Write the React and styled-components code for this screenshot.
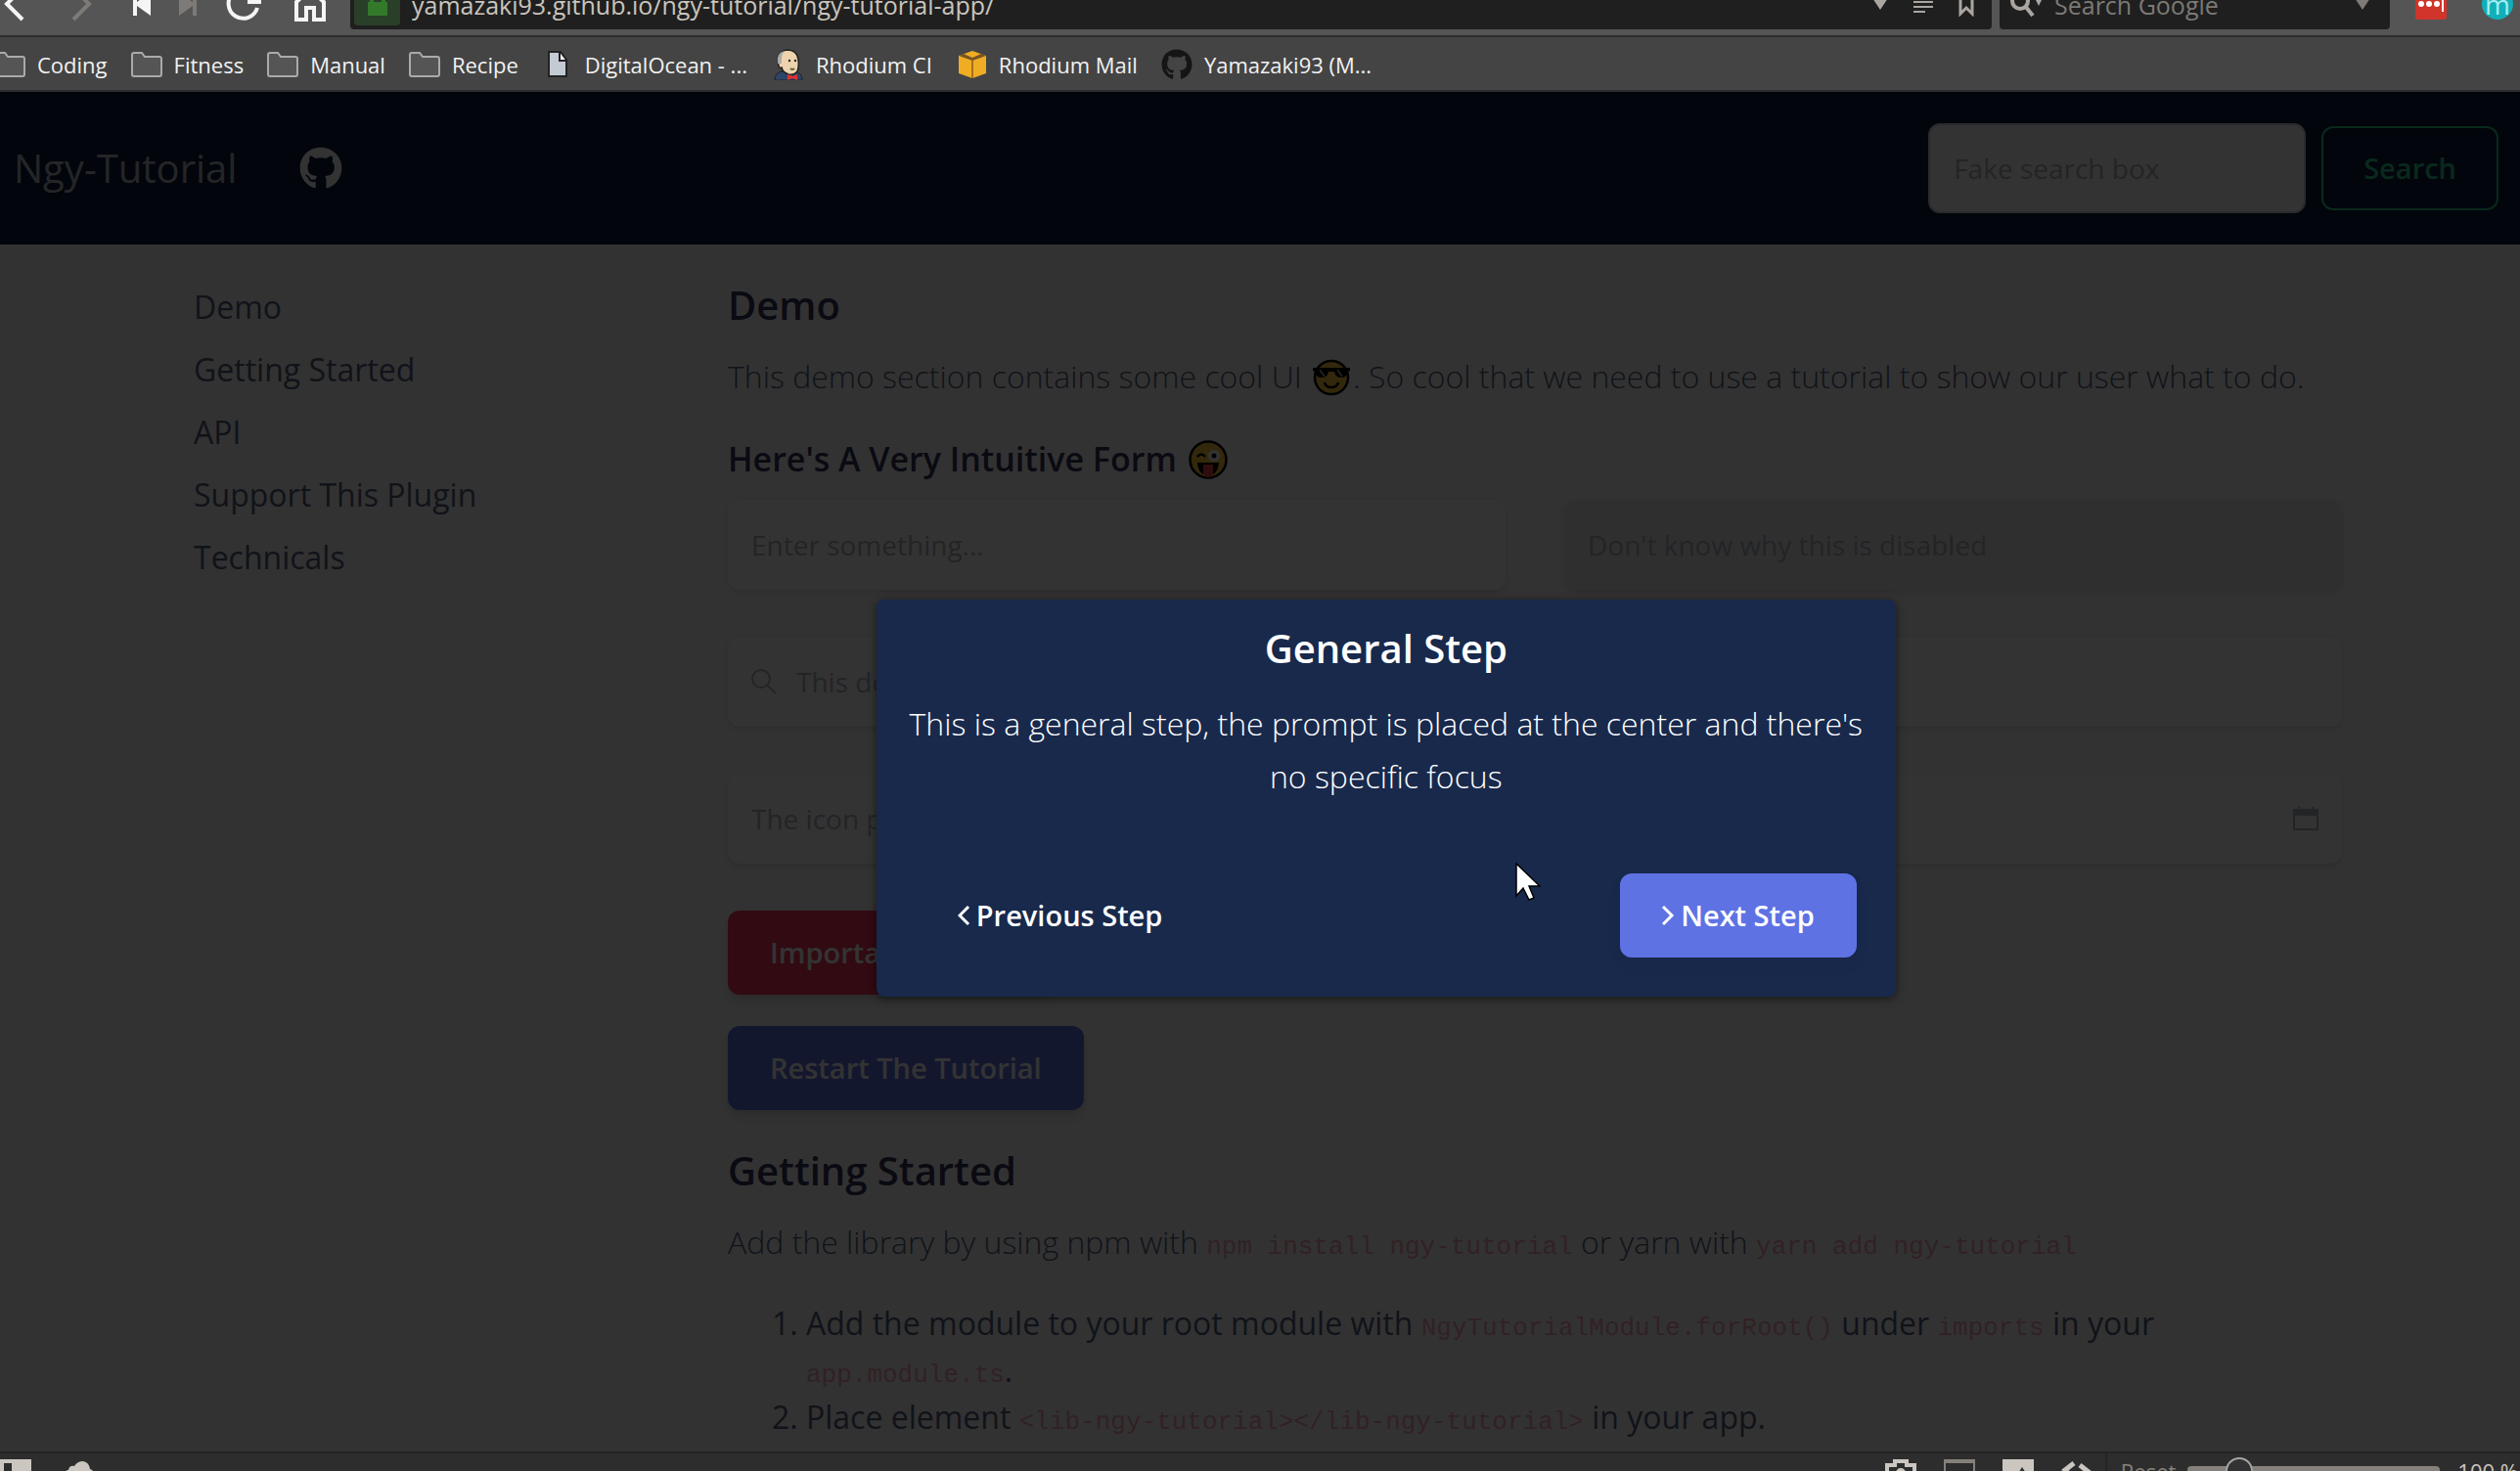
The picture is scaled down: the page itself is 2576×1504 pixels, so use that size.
import React from "react";
import styled, { createGlobalStyle } from "styled-components";
import { FaGithub } from "react-icons/fa";

const GlobalStyle = createGlobalStyle`
  *, *::before, *::after { box-sizing: border-box; }
  body {
    margin: 0;
    overflow: hidden;
    font-family: "Open Sans", "Noto Sans", sans-serif;
    font-size: 32px;
    line-height: 48px;
    color: #525f7f;
    background: #323232;
  }
  h1, h2, h3, p, ol, ul { margin: 0; padding: 0; }
  button, input { font-family: inherit; }
`;

const Window = styled.div`
  display: flex;
  flex-direction: column;
  height: 100vh;
  overflow: hidden;
`;

/* ---------- browser toolbar ---------- */

const ToolbarClip = styled.div`
  flex: none;
  display: flex;
  align-items: flex-end;
  height: 38px;
  overflow: hidden;
  background: #555555;
  border-bottom: 2px solid #2d2d2d;
`;

const Toolbar = styled.div`
  flex: 1;
  display: flex;
  align-items: center;
  gap: 8px;
  height: 64px;
  padding-right: 7px;
`;

const NavGroup = styled.div`
  display: flex;
  align-items: center;
  gap: 16px;
  width: 350px;
  flex: none;
`;

const ToolButton = styled.button`
  display: flex;
  flex: none;
  justify-content: center;
  padding: 0;
  border: 0;
  background: none;
  width: ${(p) => p.$width || 32}px;
  color: ${(p) => (p.$dim ? "#7d7a77" : "#f5f5f5")};
  svg { display: block; flex: none; }
`;

const AddressBar = styled.div`
  flex: 1;
  display: flex;
  align-items: center;
  gap: 12px;
  height: 52px;
  padding: 0 18px 0 4px;
  background: #1f1f1f;
  border-radius: 4px;
`;

const SecureBadge = styled.span`
  display: flex;
  align-items: center;
  justify-content: center;
  width: 47px;
  height: 44px;
  background: #293f27;
  border-radius: 4px;
`;

const BarInput = styled.input`
  flex: 1;
  min-width: 0;
  height: 44px;
  padding: 2px 0 0;
  border: 0;
  outline: 0;
  background: none;
  font-size: 25px;
  color: #c9c4bd;
  &::placeholder { color: #7c7976; opacity: 1; }
`;

const SearchBar = styled(AddressBar)`
  flex: none;
  width: 399px;
  padding: 0 20px 0 11px;
`;

const BarIcons = styled.span`
  display: flex;
  align-items: center;
  gap: 26px;
  color: #aaa5a0;
  svg { flex: none; }
`;

const Extensions = styled.div`
  display: flex;
  flex: none;
  align-items: center;
  gap: 36px;
  padding-left: 18px;
`;

const Extension = styled.button`
  display: flex;
  flex: none;
  align-items: center;
  justify-content: center;
  width: 32px;
  height: 32px;
  padding: 0;
  border: 0;
  border-radius: ${(p) => (p.$round ? "16px" : "3px")};
  background: ${(p) => p.$color};
  color: #a8ecf0;
  font-size: 28px;
  line-height: 24px;
`;

/* ---------- bookmarks ---------- */

const Bookmarks = styled.nav`
  flex: none;
  display: flex;
  align-items: center;
  gap: 24px;
  height: 56px;
  margin-left: -6px;
  padding-top: 2px;
  background: #444444;
  border-bottom: 2px solid #2d2d2f;
  font-size: 22px;
  line-height: 32px;
`;

const Bookmark = styled.a`
  display: flex;
  align-items: center;
  gap: 12px;
  color: #f2f2f2;
  text-decoration: none;
  white-space: nowrap;
  svg { flex: none; display: block; }
`;

/* ---------- page ---------- */

const Viewport = styled.div`
  position: relative;
  flex: 1;
  min-height: 0;
  overflow: hidden;
  background: #fafafa;
`;

const Header = styled.header`
  display: flex;
  align-items: center;
  gap: 64px;
  padding: 32px 22px 32px 14px;
  background: #0a1a3c;
`;

const Brand = styled.a`
  font-size: 40px;
  line-height: 60px;
  color: rgba(255, 255, 255, 0.7);
  text-decoration: none;
`;

const HeaderLink = styled.a`
  display: flex;
  color: #ffffff;
`;

const SearchForm = styled.form`
  display: flex;
  align-items: center;
  gap: 16px;
  margin-left: auto;
`;

const Control = styled.input`
  width: 100%;
  height: 92px;
  padding: 0 24px;
  border: 0;
  border-radius: 12px;
  outline: 0;
  font-size: 28px;
  color: #8898aa;
  background: #ffffff;
  box-shadow: 0 2px 6px rgba(50, 50, 93, 0.15), 0 2px 0 rgba(0, 0, 0, 0.02);
  &::placeholder { color: #adb5bd; opacity: 1; }
  &:disabled { background: #e9ecef; }
`;

const HeaderSearch = styled(Control)`
  width: 386px;
  border: 2px solid #cad1d7;
  box-shadow: none;
`;

const Button = styled.button`
  display: flex;
  align-items: center;
  gap: 5px;
  height: 86px;
  padding: 0 41px;
  border: 2px solid ${(p) => p.$border || p.$color || "transparent"};
  border-radius: 12px;
  background: ${(p) => p.$color || "transparent"};
  color: ${(p) => p.$text || "#ffffff"};
  font-size: 29px;
  font-weight: 600;
  line-height: 42px;
  white-space: nowrap;
  box-shadow: ${(p) =>
    p.$flat ? "none" : "0 8px 12px rgba(50, 50, 93, 0.11), 0 2px 6px rgba(0, 0, 0, 0.08)"};
`;

const Container = styled.div`
  display: grid;
  grid-template-columns: 1fr 3fr;
  width: 100%;
  max-width: 2288px;
  margin: 0 auto;
  padding: 32px 8px 0 0;
`;

const Sidebar = styled.nav`
  display: flex;
  flex-direction: column;
  padding: 0 54px;
`;

const SideLink = styled.a`
  padding: 8px 0;
  color: #525f7f;
  text-decoration: none;
`;

const Main = styled.main`
  padding: 0 30px;
`;

const Title = styled.h2`
  margin-bottom: 16px;
  font-size: 40px;
  line-height: 60px;
  font-weight: 600;
  color: ${(p) => p.$color || "#32325d"};
`;

const Subtitle = styled.h3`
  display: flex;
  align-items: center;
  gap: 12px;
  margin-bottom: 16px;
  font-size: 34px;
  line-height: 51px;
  font-weight: 600;
  color: #32325d;
`;

const Lead = styled.p`
  margin-bottom: 32px;
  line-height: 54px;
  font-weight: 300;
  svg {
    margin: 0 3px;
    vertical-align: -8px;
  }
`;

const Fields = styled.div`
  display: grid;
  grid-template-columns: 1fr 1fr;
  gap: 48px 60px;
`;

const IconField = styled.label`
  grid-column: 1 / -1;
  display: flex;
  align-items: center;
  gap: 20px;
  padding: 0 24px;
  border-radius: 12px;
  background: #ffffff;
  color: #adb5bd;
  box-shadow: 0 2px 6px rgba(50, 50, 93, 0.15), 0 2px 0 rgba(0, 0, 0, 0.02);
  svg { flex: none; }
`;

const BareControl = styled(Control)`
  padding: 0;
  border-radius: 0;
  box-shadow: none;
`;

const Actions = styled.div`
  display: flex;
  flex-direction: column;
  align-items: flex-start;
  gap: 32px;
  padding: 48px 0 32px;
`;

const Code = styled.code`
  font-family: "Liberation Mono", monospace;
  font-size: 26px;
  font-weight: 400;
  line-height: 24px;
  color: #f3a4b5;
`;

const Steps = styled.ol`
  padding-left: 80px;
`;

/* ---------- tutorial overlay ---------- */

const Backdrop = styled.div`
  position: absolute;
  inset: 0;
  background: rgba(0, 0, 0, 0.8);
`;

const Dialog = styled.section`
  position: absolute;
  top: 519px;
  left: 55%;
  width: 1042px;
  padding: 20px;
  transform: translateX(-50%);
  border-radius: 8px;
  background: #18294c;
  color: #ffffff;
  text-align: center;
  box-shadow: 0 2px 10px rgba(0, 0, 0, 0.5);
`;

const DialogTitle = styled(Title)`
  margin-bottom: 20px;
`;

const DialogText = styled.p`
  line-height: 54px;
  font-weight: 300;
`;

const DialogActions = styled.div`
  display: flex;
  justify-content: space-between;
  padding: 72px 20px 20px;
`;

const Pointer = styled.svg`
  position: absolute;
  top: 788px;
  left: 1549px;
`;

/* ---------- status bar ---------- */

const StatusClip = styled.footer`
  flex: none;
  height: 20px;
  overflow: hidden;
  background: #2d2d2d;
  border-top: 2px solid #242424;
`;

const Status = styled.div`
  display: flex;
  align-items: center;
  justify-content: space-between;
  height: 36px;
  padding-right: 2px;
  color: #cbc6bf;
  font-size: 22px;
  line-height: 36px;
`;

const StatusGroup = styled.div`
  display: flex;
  align-items: center;
  gap: ${(p) => p.$gap}px;
`;

const Zoom = styled.div`
  display: flex;
  align-items: center;
  gap: 12px;
  height: 36px;
  margin-left: -15px;
  padding-left: 14px;
  border-left: 2px solid #242424;
`;

const ZoomReset = styled.button`
  padding: 0;
  border: 0;
  background: none;
  color: #85817a;
  font-size: 22px;
`;

const ZoomSlider = styled.input`
  appearance: none;
  width: 258px;
  height: 10px;
  margin: 0 6px 0 0;
  border-radius: 4px;
  background: #85817a;
  &::-webkit-slider-thumb {
    appearance: none;
    width: 28px;
    height: 28px;
    border: 2px solid #a5a5a5;
    border-radius: 14px;
    background: #323232;
  }
`;

/* ---------- drawings ---------- */

const Folder = () => (
  <svg width="32" height="26" viewBox="0 0 32 26" fill="#555" stroke="#aaa" strokeWidth="2">
    <path d="M1 23V3q0-2 2-2h8l3 4h15q2 0 2 2v16q0 2-2 2H3q-2 0-2-2z" />
  </svg>
);

const Document = () => (
  <svg width="32" height="28" viewBox="0 0 32 28">
    <path d="M7 1h12l6 8v17H7z" fill="#c4cad2" stroke="#222" strokeWidth="2" />
    <path d="M18 2v8h6" fill="#fff" stroke="#222" strokeWidth="2" />
  </svg>
);

const Butler = () => (
  <svg width="34" height="32" viewBox="0 0 34 32">
    <path d="M4 32q0-9 9-9h11q8 1 8 9z" fill="#2f4568" stroke="#222" />
    <path d="M14 22l6 6 5-7z" fill="#fff" />
    <path d="M8 17Q4 4 16 1q11 0 12 10 1 7-1 12-3 4-9 3-6-2-7-7-3 1-3-2z" fill="#edd3ae" stroke="#222" strokeWidth="1.5" />
    <path d="M7 15Q5 4 14 2q-4 4-3 13z" fill="#aaa" />
    <circle cx="19" cy="12" r="1.2" fill="#222" />
    <circle cx="25" cy="12" r="1.2" fill="#222" />
    <path d="M20 20q2 2 4 0" fill="none" stroke="#664" strokeWidth="2" />
    <path d="M17 26l5 2 5-2v6l-5-2-5 2z" fill="#d33" />
  </svg>
);

const Cube = () => (
  <svg width="32" height="30" viewBox="0 0 32 30">
    <path d="M3 6l14-5 14 5v18l-14 5-14-5z" fill="#f0ad24" />
    <path d="M3 6l14 5 14-5-5-2-9 4-9-4z" fill="#775423" />
    <path d="M16 11h2v18h-2z" fill="#a56f1e" />
  </svg>
);

const CoolFace = () => (
  <svg width="38" height="38" viewBox="0 0 38 38" role="img" aria-label="Smiling face with sunglasses">
    <circle cx="19" cy="19" r="17" fill="#ffc83d" stroke="#000" strokeWidth="2.5" />
    <path d="M0 9h38v3l-2 1q-1 6-7 6-6 0-7-6h-6q-1 6-7 6-6 0-7-6l-2-1z" fill="#000" />
    <path d="M7 11l5 7M25 11l5 7" stroke="#999" strokeWidth="2" />
    <path d="M12 24q1 5 7 5t7-5" fill="none" stroke="#000" strokeWidth="2.5" />
  </svg>
);

const TongueFace = () => (
  <svg width="40" height="40" viewBox="0 0 40 40" role="img" aria-label="Winking face with tongue">
    <circle cx="20" cy="20" r="18.5" fill="#ffc83d" stroke="#000" strokeWidth="2.5" />
    <path d="M9 17q4-5 8 0" fill="none" stroke="#000" strokeWidth="2.5" />
    <circle cx="26" cy="16" r="6" fill="#fff" />
    <circle cx="26" cy="16" r="2.5" fill="#000" />
    <path d="M9 23h22q-1 13-11 13T9 23z" fill="#000" />
    <path d="M15 25h10v9q-1 4-5 4t-5-4z" fill="#e8404a" />
  </svg>
);

const Chevron = ({ right }) => (
  <svg width="14" height="22" viewBox="0 0 14 22" fill="none" stroke="currentColor" strokeWidth="3" aria-hidden="true">
    <path d={right ? "M1 2l9 9-9 9" : "M11 2L2 11l9 9"} />
  </svg>
);

const Caret = () => (
  <svg width="16" height="12" viewBox="0 0 16 12" fill="currentColor" aria-hidden="true">
    <path d="M0 0h16L8 12z" />
  </svg>
);

const BOOKMARKS = [
  ["Coding", <Folder />],
  ["Fitness", <Folder />],
  ["Manual", <Folder />],
  ["Recipe", <Folder />],
  ["DigitalOcean - ...", <Document />],
  ["Rhodium CI", <Butler />],
  ["Rhodium Mail", <Cube />],
  ["Yamazaki93 (M...", <FaGithub size={32} color="#151515" />],
];

const SECTIONS = ["Demo", "Getting Started", "API", "Support This Plugin", "Technicals"];

function BrowserToolbar() {
  return (
    <ToolbarClip>
      <Toolbar>
        <NavGroup>
          <ToolButton aria-label="Back">
            <svg width="32" height="36" viewBox="0 0 32 36" fill="none" stroke="currentColor" strokeWidth="4">
              <path d="M23 2L7 18l16 16" />
            </svg>
          </ToolButton>
          <ToolButton aria-label="Forward" $dim $width={72}>
            <svg width="32" height="36" viewBox="0 0 32 36" fill="none" stroke="currentColor" strokeWidth="4">
              <path d="M7 2l16 16L7 34" />
            </svg>
          </ToolButton>
          <ToolButton aria-label="Rewind" $width={18}>
            <svg width="18" height="24" viewBox="0 0 18 24" fill="currentColor">
              <path d="M0 0h4v10L18 0v24L4 14v10H0z" />
            </svg>
          </ToolButton>
          <ToolButton aria-label="Fast forward" $dim $width={44}>
            <svg width="18" height="24" viewBox="0 0 18 24" fill="currentColor">
              <path d="M18 0h-4v10L0 0v24l14-10v10h4z" />
            </svg>
          </ToolButton>
          <ToolButton aria-label="Reload" $width={38}>
            <svg width="36" height="36" viewBox="0 0 36 36" fill="none" stroke="currentColor" strokeWidth="4">
              <path d="M31 11A15 15 0 1 0 32 22" />
              <path d="M22 16h12V4" />
            </svg>
          </ToolButton>
          <ToolButton aria-label="Home" $width={66}>
            <svg width="32" height="36" viewBox="0 0 32 36" fill="none" stroke="currentColor" strokeWidth="4">
              <path d="M2 16L16 3l14 13v18H20V22h-8v12H2z" />
            </svg>
          </ToolButton>
        </NavGroup>
        <AddressBar>
          <SecureBadge>
            <svg width="20" height="30" viewBox="0 0 20 30">
              <path d="M4 16V8q0-6 6-6t6 6v8" fill="none" stroke="#327a2a" strokeWidth="4" />
              <path d="M0 13h20v14H0z" fill="#327a2a" />
            </svg>
          </SecureBadge>
          <BarInput aria-label="Address" defaultValue="yamazaki93.github.io/ngy-tutorial/ngy-tutorial-app/" />
          <BarIcons>
            <Caret />
            <svg width="20" height="20" viewBox="0 0 20 20" stroke="currentColor" strokeWidth="2">
              <path d="M0 3h20M0 8h20M0 13h20M0 18h12" />
            </svg>
            <svg width="16" height="26" viewBox="0 0 16 26" fill="none" stroke="currentColor" strokeWidth="3">
              <path d="M2 2h12v21l-6-6-6 6z" />
            </svg>
          </BarIcons>
        </AddressBar>
        <SearchBar>
          <BarIcons>
            <svg width="33" height="28" viewBox="0 0 33 28" fill="none" stroke="currentColor" strokeWidth="4">
              <circle cx="10" cy="11" r="8" />
              <path d="M15 16l8 10" />
              <path d="M25 8h8l-4 8z" fill="currentColor" stroke="none" />
            </svg>
          </BarIcons>
          <BarInput aria-label="Search Google" placeholder="Search Google" />
          <ToolButton aria-label="Search engines" $dim $width={16}>
            <Caret />
          </ToolButton>
        </SearchBar>
        <Extensions>
          <Extension $color="#d0342a" aria-label="Password manager">
            <svg width="28" height="16" viewBox="0 0 28 16" fill="#fff">
              <circle cx="4" cy="8" r="3" />
              <circle cx="12" cy="8" r="3" />
              <circle cx="20" cy="8" r="3" />
              <path d="M25 0h2v16h-2z" />
            </svg>
          </Extension>
          <Extension $color="#10b0b8" $round>m</Extension>
        </Extensions>
      </Toolbar>
    </ToolbarClip>
  );
}

function Page() {
  return (
    <>
      <Header>
        <Brand href="#top">Ngy-Tutorial</Brand>
        <HeaderLink href="#github" aria-label="GitHub">
          <FaGithub size={44} />
        </HeaderLink>
        <SearchForm>
          <HeaderSearch aria-label="Search" placeholder="Fake search box" />
          <Button type="button" $border="#2dce89" $text="#2dce89" $flat>
            Search
          </Button>
        </SearchForm>
      </Header>
      <Container>
        <Sidebar>
          {SECTIONS.map((name) => (
            <SideLink key={name} href="#section">
              {name}
            </SideLink>
          ))}
        </Sidebar>
        <Main>
          <Title>Demo</Title>
          <Lead>
            This demo section contains some cool UI <CoolFace />. So cool that we need to use a
            tutorial to show our user what to do.
          </Lead>
          <Subtitle>
            Here's A Very Intuitive Form <TongueFace />
          </Subtitle>
          <Fields>
            <Control aria-label="Something" placeholder="Enter something..." />
            <Control aria-label="Disabled" placeholder="Don't know why this is disabled" disabled />
            <IconField>
              <svg width="26" height="26" viewBox="0 0 26 26" fill="none" stroke="currentColor" strokeWidth="2">
                <circle cx="10" cy="10" r="9" />
                <path d="M17 17l8 8" />
              </svg>
              <BareControl aria-label="Search field" placeholder="This does nothing" />
            </IconField>
            <IconField>
              <BareControl aria-label="Date field" placeholder="The icon position is different" />
              <svg width="26" height="24" viewBox="0 0 26 24">
                <path d="M1 3h24v20H1z" fill="none" stroke="currentColor" strokeWidth="2" />
                <path d="M0 2h26v7H0zM5 0h2v4H5zM19 0h2v4h-2z" fill="currentColor" />
              </svg>
            </IconField>
          </Fields>
          <Actions>
            <Button $color="#f5365c">Important Button</Button>
            <Button $color="#5e72e4">Restart The Tutorial</Button>
          </Actions>
          <Title>Getting Started</Title>
          <Lead>
            Add the library by using npm with <Code>npm install ngy-tutorial</Code> or yarn with{" "}
            <Code>yarn add ngy-tutorial</Code>
          </Lead>
          <Steps>
            <li>
              Add the module to your root module with <Code>NgyTutorialModule.forRoot()</Code> under{" "}
              <Code>imports</Code> in your <Code>app.module.ts</Code>.
            </li>
            <li>
              Place element <Code>{"<lib-ngy-tutorial></lib-ngy-tutorial>"}</Code> in your app.
            </li>
          </Steps>
        </Main>
      </Container>
    </>
  );
}

function TutorialStep() {
  return (
    <Backdrop>
      <Dialog role="dialog" aria-labelledby="step-title">
        <DialogTitle id="step-title" $color="#ffffff">
          General Step
        </DialogTitle>
        <DialogText>
          This is a general step, the prompt is placed at the center and there's no specific focus
        </DialogText>
        <DialogActions>
          <Button $flat>
            <Chevron />
            Previous Step
          </Button>
          <Button $color="#5e72e4">
            <Chevron right />
            Next Step
          </Button>
        </DialogActions>
      </Dialog>
      <Pointer width="26" height="40" viewBox="0 0 26 40">
        <path d="M1 1v33l7-8 6 12 5-2-5-12h11z" fill="#fff" stroke="#000" strokeWidth="1.5" />
      </Pointer>
    </Backdrop>
  );
}

function StatusBar() {
  return (
    <StatusClip>
      <Status>
        <StatusGroup $gap={34}>
          <svg width="32" height="24" viewBox="0 0 32 24">
            <path d="M0 0h32v24H0z" fill="#cbc6bf" />
            <path d="M4 4h8v16H4z" fill="#2d2d2d" />
          </svg>
          <svg width="30" height="20" viewBox="0 0 30 20" fill="#cbc6bf">
            <path d="M6 20q-6 0-6-6 0-5 4-5 1-5 6-4 3-5 9-5 6 1 7 8 4 1 4 6t-5 6z" />
          </svg>
        </StatusGroup>
        <StatusGroup $gap={28}>
          <svg width="32" height="24" viewBox="0 0 32 24" fill="none" stroke="#cbc6bf" strokeWidth="4">
            <path d="M2 22V6h8V2h12v4h8v16z" />
            <circle cx="16" cy="14" r="3" />
          </svg>
          <svg width="32" height="24" viewBox="0 0 32 24" fill="none" stroke="#85817a">
            <path d="M1 1v22h30V1z" strokeWidth="2" />
            <path d="M0 2h32" strokeWidth="4" />
          </svg>
          <svg width="32" height="24" viewBox="0 0 32 24">
            <path d="M0 0h32v24H0z" fill="#cbc6bf" />
            <path d="M4 20l8-7 3 3 5-8 8 12z" fill="#2d2d2d" />
          </svg>
          <svg width="32" height="20" viewBox="0 0 32 20" fill="none" stroke="#cbc6bf" strokeWidth="5">
            <path d="M13 2L4 9l9 9M19 4l9 7-9 7" />
          </svg>
          <Zoom>
            <ZoomReset>Reset</ZoomReset>
            <ZoomSlider type="range" aria-label="Zoom" min="0" max="100" defaultValue="17" />
            <span>100 %</span>
          </Zoom>
        </StatusGroup>
      </Status>
    </StatusClip>
  );
}

export default function App() {
  return (
    <Window>
      <GlobalStyle />
      <BrowserToolbar />
      <Bookmarks aria-label="Bookmarks">
        {BOOKMARKS.map(([name, icon]) => (
          <Bookmark key={name} href="#bookmark">
            {icon}
            {name}
          </Bookmark>
        ))}
      </Bookmarks>
      <Viewport>
        <Page />
        <TutorialStep />
      </Viewport>
      <StatusBar />
    </Window>
  );
}
